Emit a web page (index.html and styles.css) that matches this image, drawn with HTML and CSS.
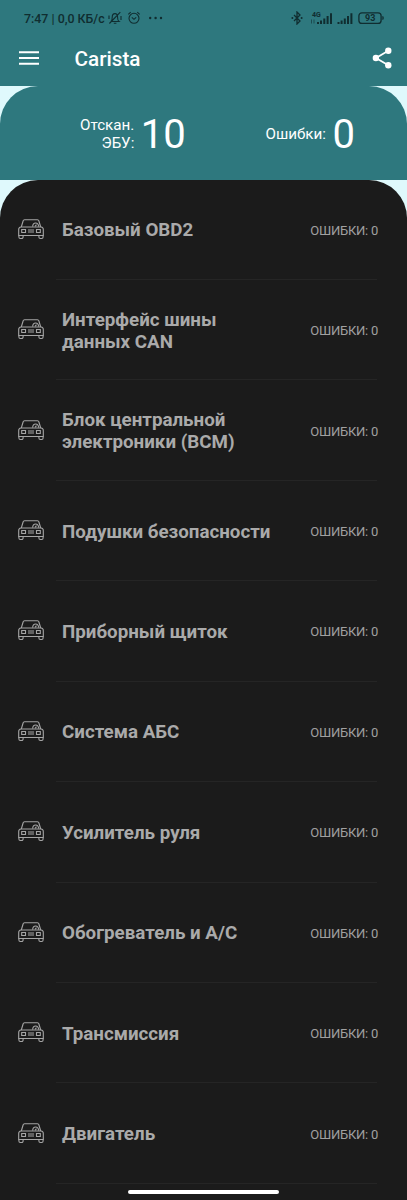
FILE: index.html
```html
<!DOCTYPE html>
<html lang="ru">
<head>
  <meta charset="UTF-8">
  <meta name="viewport" content="width=device-width, initial-scale=1.0">
  <title>Carista</title>
  <link rel="stylesheet" href="styles.css">
</head>
<body>
  <svg class="sprite" width="0" height="0">
    <symbol id="car" viewBox="0 0 26 21">
      <path d="M3.3 8 L5.1 2 Q5.4 .7 6.6 .7 H19.4 Q20.6 .7 20.9 2 L22.7 8"/>
      <path d="M3 8 H23 Q25.3 8.3 25.3 10.5 V16.5 H.7 V10.5 Q.7 8.3 3 8 Z"/>
      <path d="M.9 16.5 V18 Q.9 19.5 2.3 19.5 H3.6 Q5.1 19.5 5.1 18 V16.7 M20.9 16.7 V18 Q20.9 19.5 22.4 19.5 H23.7 Q25.1 19.5 25.1 18 V16.5"/>
      <path d="M14.6 7.6 Q14.9 4 17.6 4 Q20.3 4 20.7 7.6 M17 7.4 L18.5 5.6"/>
      <path d="M3.7 10.5 H7.5 V13.5 H3.7 Z M18.5 10.5 H22.3 V13.5 H18.5 Z M10 11 H16 M10 13 H16"/>
    </symbol>
  </svg>

  <header class="header">
    <div class="status-bar">
      <span class="status-time">7:47 | 0,0 КБ/с</span>
      <svg class="status-left" width="56" height="14" viewBox="0 0 56 14">
        <path d="M3 10.5 H11 Q9.6 9.5 9.6 6.5 Q9.6 2.6 7 2.6 Q4.2 2.6 4.2 6.5 Q4.2 9.5 3 10.5 M5.8 12.3 H8.4 M12.3 1.2 L1.4 12.5 M1 4.5 V8 M13 5 V9"/>
        <circle cx="26" cy="7.3" r="5"/>
        <path d="M23.8 6.3 L26 8.3 L28.2 6.3 M20.3 3.3 L22.7 1.2 M31.7 3.3 L29.3 1.2"/>
        <g class="solid"><circle cx="42.2" cy="7" r="1.2"/><circle cx="47.6" cy="7" r="1.2"/><circle cx="53" cy="7" r="1.2"/></g>
      </svg>
      <svg class="status-right" width="94" height="14" viewBox="0 0 94 14">
        <path d="M3 4 L9 10 L6 13 V1 L9 4 L3 10"/>
        <g class="solid">
          <circle cx="1.4" cy="7" r="1"/><circle cx="10.6" cy="7" r="1"/>
          <text class="network" x="21" y="5.6">4G</text>
          <path d="M26 11 h2 v2 h-2z M29 9.5 h2 v3.5 h-2z M32.3 7.5 h2 v5.5 h-2z M35.6 5 h2 v8 h-2z M39 2.2 h2 v10.8 h-2z"/>
          <path d="M46.5 11 h2 v2 h-2z M49.6 9.5 h2 v3.5 h-2z M52.8 7.5 h2 v5.5 h-2z M56 5 h2 v8 h-2z M59.4 2.2 h2 v10.8 h-2z"/>
          <path d="M91.3 5 q1.5 0 1.5 2 t-1.5 2z"/>
          <text class="charge" x="74" y="10.3">93</text>
        </g>
        <path class="thin" d="M20.5 8.5 V12.5 M23 8.5 V12.5"/>
        <rect x="67.9" y="1.8" width="22.2" height="10.6" rx="3"/>
      </svg>
    </div>
    <div class="app-bar">
      <svg class="menu-icon" width="20" height="14" viewBox="0 0 20 14">
        <path d="M0 1.3 H20 M0 7 H20 M0 12.7 H20"/>
      </svg>
      <h1 class="title">Carista</h1>
      <svg class="share-icon" width="20" height="22" viewBox="0 0 20 22">
        <path d="M16.3 3.8 L4 11 L16.3 18.3"/>
        <circle cx="16.3" cy="3.7" r="3.2"/><circle cx="3.9" cy="11" r="3.2"/><circle cx="16.3" cy="18.3" r="3.2"/>
      </svg>
    </div>
  </header>

  <main class="content">
    <section class="summary">
      <div class="stat">
        <span class="stat-label">Отскан.<br>ЭБУ:</span>
        <span class="stat-value">10</span>
      </div>
      <div class="stat stat-errors">
        <span class="stat-label">Ошибки:</span>
        <span class="stat-value">0</span>
      </div>
    </section>

    <ul class="list">
      <li class="row"><svg class="car"><use href="#car"/></svg><div class="row-body"><span class="name">Базовый OBD2</span><span class="errors">ОШИБКИ: 0</span></div></li>
      <li class="row"><svg class="car"><use href="#car"/></svg><div class="row-body"><span class="name">Интерфейс шины<br>данных CAN</span><span class="errors">ОШИБКИ: 0</span></div></li>
      <li class="row"><svg class="car"><use href="#car"/></svg><div class="row-body"><span class="name">Блок центральной<br>электроники (BCM)</span><span class="errors">ОШИБКИ: 0</span></div></li>
      <li class="row"><svg class="car"><use href="#car"/></svg><div class="row-body"><span class="name">Подушки безопасности</span><span class="errors">ОШИБКИ: 0</span></div></li>
      <li class="row"><svg class="car"><use href="#car"/></svg><div class="row-body"><span class="name">Приборный щиток</span><span class="errors">ОШИБКИ: 0</span></div></li>
      <li class="row"><svg class="car"><use href="#car"/></svg><div class="row-body"><span class="name">Система АБС</span><span class="errors">ОШИБКИ: 0</span></div></li>
      <li class="row"><svg class="car"><use href="#car"/></svg><div class="row-body"><span class="name">Усилитель руля</span><span class="errors">ОШИБКИ: 0</span></div></li>
      <li class="row"><svg class="car"><use href="#car"/></svg><div class="row-body"><span class="name">Обогреватель и А/С</span><span class="errors">ОШИБКИ: 0</span></div></li>
      <li class="row"><svg class="car"><use href="#car"/></svg><div class="row-body"><span class="name">Трансмиссия</span><span class="errors">ОШИБКИ: 0</span></div></li>
      <li class="row"><svg class="car"><use href="#car"/></svg><div class="row-body"><span class="name">Двигатель</span><span class="errors">ОШИБКИ: 0</span></div></li>
    </ul>
  </main>

  <div class="home-indicator"></div>
</body>
</html>
```
FILE: styles.css
```css
* {
  box-sizing: border-box;
}

body {
  margin: 0;
  height: 1200px;
  overflow: hidden;
  background-color: #dff9fc;
  font-family: Roboto, "Noto Sans", sans-serif;
  color: #fff;
}

.sprite {
  display: block;
}

/* Header */
.header {
  height: 86px;
  background-color: #2e787e;
}

.status-bar {
  display: flex;
  align-items: center;
  height: 36px;
  padding: 0 22px 0 24px;
  color: #102d30;
}

.status-time {
  width: 84px;
  font-size: 12.4px;
  font-weight: 500;
  white-space: nowrap;
}

.status-bar svg {
  fill: none;
  stroke: #102d30;
  stroke-width: 1.1;
}

.status-bar .status-right {
  margin-left: auto;
  stroke-width: 1.3;
}

.status-bar .solid {
  fill: #102d30;
  stroke: none;
}

.status-bar .thin {
  stroke-width: 0.6;
}

.network {
  font-size: 7px;
  font-weight: 700;
}

.charge {
  font-size: 9px;
  font-weight: 700;
}

.app-bar {
  display: flex;
  align-items: center;
  height: 43px;
  padding: 0 15px 0 19px;
}

.menu-icon {
  stroke: #fff;
  stroke-width: 1.9;
}

.title {
  margin: 2px 0 0 35.5px;
  font-size: 20.7px;
  font-weight: 500;
}

.share-icon {
  margin-left: auto;
  fill: #fff;
}

.share-icon path {
  fill: none;
  stroke: #fff;
  stroke-width: 1.8;
}

/* Scan summary */
.summary {
  display: flex;
  height: 93.5px;
  padding: 2px 52px 0 80px;
  background-color: #2e787e;
  border-radius: 38px 38px 0 0;
}

.stat {
  display: flex;
  align-items: center;
}

.stat-errors {
  margin-left: auto;
}

.stat-label {
  font-size: 15.2px;
  line-height: 18px;
  text-align: right;
}

.stat-value {
  margin-left: 6.5px;
  padding-top: 3px;
  font-size: 40px;
  line-height: 48px;
}

/* ECU list */
.content {
  height: 1114px;
}

.list {
  height: 1020.5px;
  margin: 0;
  padding: 0;
  list-style: none;
  background-color: #1b1b1b;
  border-radius: 38px 38px 0 0;
}

.row {
  display: flex;
  align-items: center;
  height: 100.45px;
  padding: 0 30px 0 18px;
}

.car {
  width: 26px;
  height: 21px;
  margin-bottom: 1px;
  fill: none;
  stroke: #a5a5a5;
  stroke-width: 1.1;
}

.row-body {
  display: flex;
  flex: 1;
  align-items: center;
  justify-content: space-between;
  height: 100%;
  margin-left: 12px;
  padding: 2px 0 0 6px;
  border-bottom: 1px solid #252525;
}

.name {
  font-size: 18.75px;
  font-weight: 700;
  line-height: 22px;
  color: #aaa;
}

.errors {
  margin-right: -1px;
  font-size: 13px;
  letter-spacing: -0.25px;
  color: #a0a0a0;
}

/* System gesture bar */
.home-indicator {
  position: absolute;
  left: 128px;
  top: 1190px;
  width: 151px;
  height: 4px;
  border-radius: 2px;
  background-color: #fff;
}
```
